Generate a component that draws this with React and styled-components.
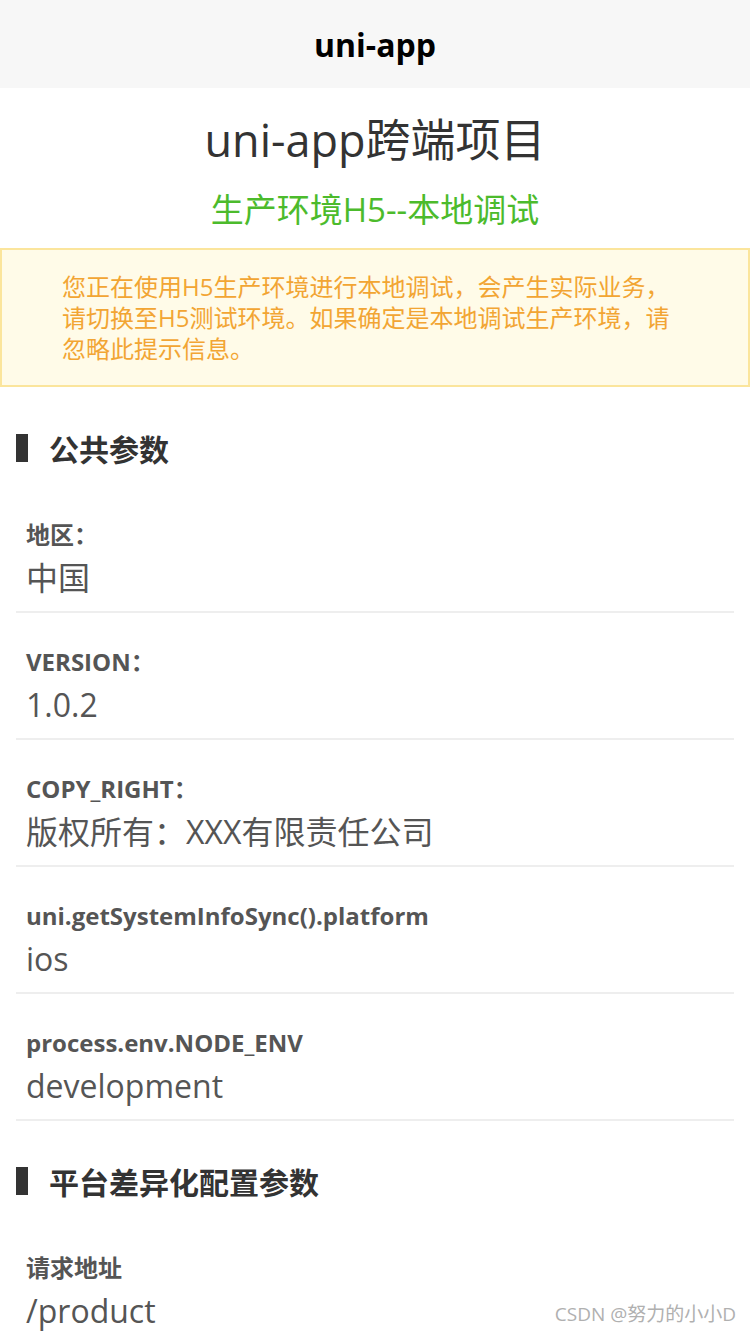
import React from "react";
import styled, { createGlobalStyle } from "styled-components";

const GlobalStyle = createGlobalStyle`
  html, body {
    margin: 0;
    padding: 0;
    background: #ffffff;
  }
  body {
    font-family: "Open Sans", "Noto Sans CJK SC", sans-serif;
  }
`;

const publicParams = [
  { label: "地区：", value: "中国" },
  { label: "VERSION：", value: "1.0.2" },
  { label: "COPY_RIGHT：", value: "版权所有：XXX有限责任公司" },
  { label: "uni.getSystemInfoSync().platform", value: "ios" },
  { label: "process.env.NODE_ENV", value: "development" },
];

const platformParams = [{ label: "请求地址", value: "/product" }];

const App = () => {
  return (
    <Page>
      <GlobalStyle />
      <NavBar>uni-app</NavBar>
      <Hero>
        <Title>uni-app跨端项目</Title>
        <SubTitle>生产环境H5--本地调试</SubTitle>
      </Hero>
      <Notice>
        您正在使用H5生产环境进行本地调试，会产生实际业务，请切换至H5测试环境。如果确定是本地调试生产环境，请忽略此提示信息。
      </Notice>

      <SectionTitle>公共参数</SectionTitle>
      <List>
        {publicParams.map((item) => (
          <Item key={item.label}>
            <Label>{item.label}</Label>
            <Value>{item.value}</Value>
          </Item>
        ))}
      </List>

      <SectionTitle>平台差异化配置参数</SectionTitle>
      <List>
        {platformParams.map((item) => (
          <Item key={item.label}>
            <Label>{item.label}</Label>
            <Value>{item.value}</Value>
          </Item>
        ))}
      </List>

      <Watermark>CSDN @努力的小小D</Watermark>
    </Page>
  );
};

export default App;

const Page = styled.div`
  position: relative;
  width: 750px;
  min-height: 1334px;
  overflow: hidden;
  background: #fff;
`;

const NavBar = styled.div`
  height: 88px;
  display: flex;
  align-items: center;
  justify-content: center;
  background: #f7f7f7;
  color: #000;
  font-size: 32px;
  font-weight: 700;
`;

const Hero = styled.div`
  display: flex;
  flex-direction: column;
  align-items: center;
  padding-top: 22px;
`;

const Title = styled.h1`
  margin: 0;
  font-size: 45px;
  font-weight: 400;
  line-height: 60px;
  color: #333;
`;

const SubTitle = styled.h2`
  margin: 18px 0 0;
  font-size: 33px;
  font-weight: 400;
  line-height: 44px;
  color: #4cbb2c;
`;

const Notice = styled.div`
  margin: 16px 0 1px;
  box-sizing: border-box;
  height: 139px;
  padding: 21px 62px 0 60px;
  background: #fffbe8;
  border: 2px solid #fbe59c;
  color: #f2a533;
  font-size: 24px;
  line-height: 31px;
`;

const SectionTitle = styled.div`
  display: flex;
  align-items: center;
  gap: 21px;
  padding: 40px 16px 18px;
  height: 40px;
  font-size: 30px;
  font-weight: 700;
  color: #333;

  &::before {
    content: "";
    width: 12px;
    height: 28px;
    background: #333;
  }
`;

const List = styled.div`
  margin: 0 16px;
`;

const Item = styled.div`
  padding: 34px 10px 13px;
  border-bottom: 2px solid #eeeeee;
`;

const Label = styled.div`
  font-size: 24px;
  font-weight: 700;
  line-height: 30px;
  color: #555;
`;

const Value = styled.div`
  margin-top: 8px;
  font-size: 32px;
  line-height: 40px;
  color: #555;
`;

const Watermark = styled.div`
  position: absolute;
  right: 14px;
  top: 1300px;
  font-size: 19px;
  line-height: 28px;
  color: #b0b0b0;
  text-shadow: 0 0 2px #fff;
`;
